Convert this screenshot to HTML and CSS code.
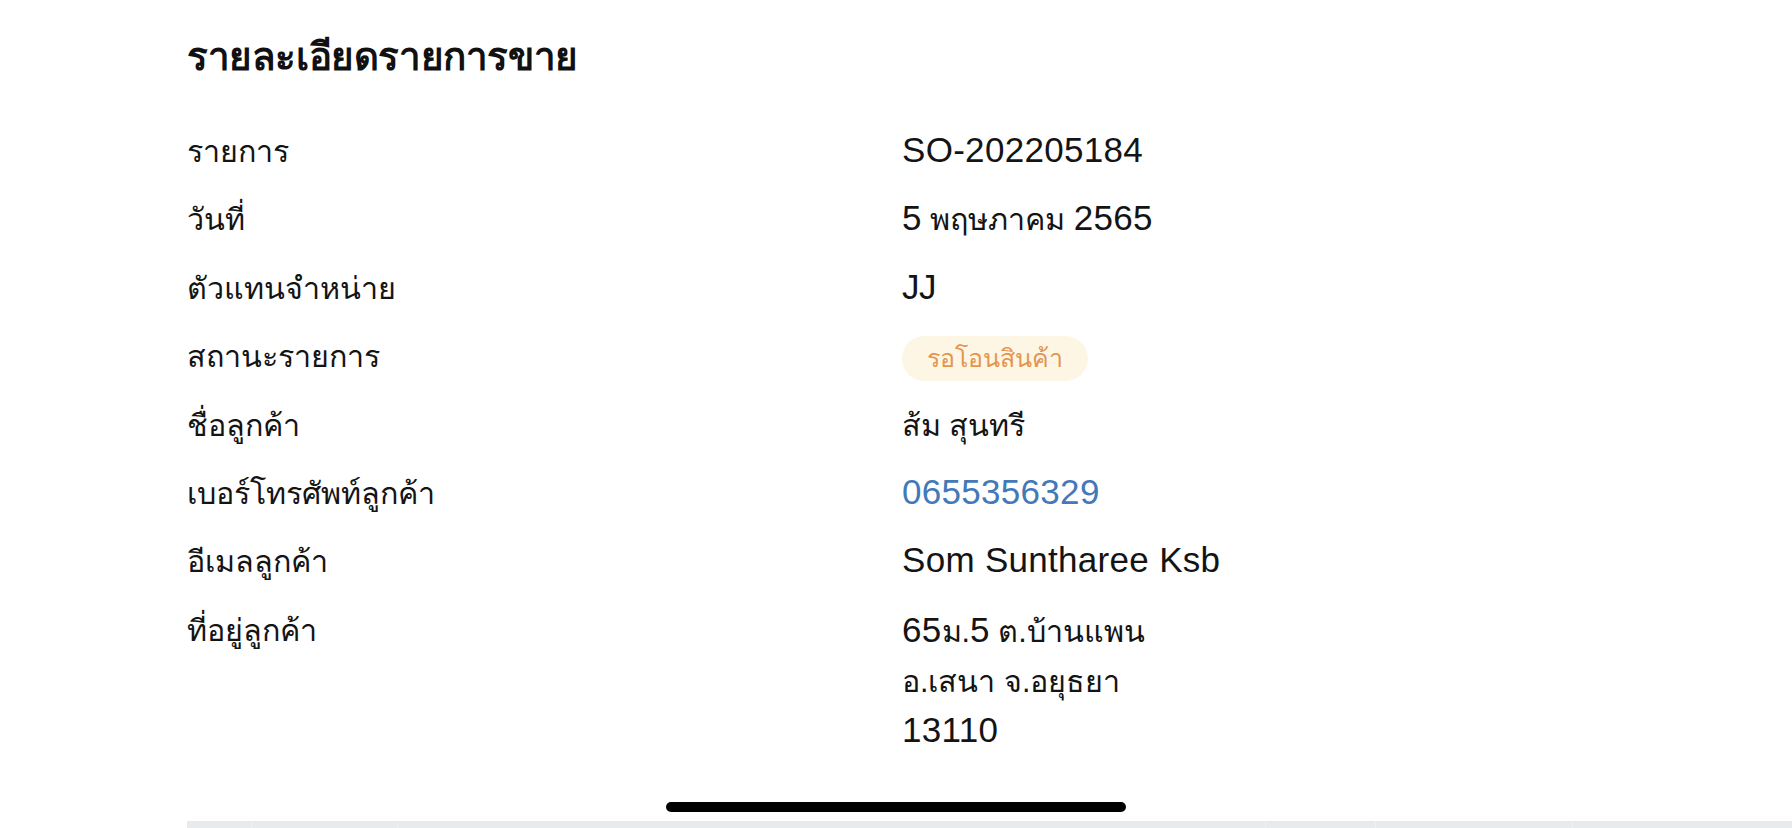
FILE: index.html
```html
<!DOCTYPE html>
<html lang="th">
<head>
<meta charset="utf-8">
<title>รายละเอียดรายการขาย</title>
<link rel="stylesheet" href="styles.css">
</head>
<body>
<main class="page">
  <h1 class="title">รายละเอียดรายการขาย</h1>
  <dl class="details">
    <dt>รายการ</dt><dd><span class="line"><span class="en">SO-202205184</span></span></dd>
    <dt>วันที่</dt><dd><span class="line"><span class="en">5</span> พฤษภาคม <span class="en">2565</span></span></dd>
    <dt>ตัวแทนจำหน่าย</dt><dd><span class="line"><span class="en jj">JJ</span></span></dd>
    <dt>สถานะรายการ</dt><dd class="status"><span class="badge">รอโอนสินค้า</span></dd>
    <dt>ชื่อลูกค้า</dt><dd><span class="line">ส้ม สุนทรี</span></dd>
    <dt>เบอร์โทรศัพท์ลูกค้า</dt><dd><span class="line"><a class="phone en" href="#">0655356329</a></span></dd>
    <dt>อีเมลลูกค้า</dt><dd><span class="line"><span class="en">Som Suntharee Ksb</span></span></dd>
    <dt>ที่อยู่ลูกค้า</dt>
    <dd class="address">
      <span class="line"><span class="en">65</span>ม.<span class="en">5</span> ต.บ้านแพน</span>
      <span class="line">อ.เสนา จ.อยุธยา</span>
      <span class="line"><span class="en">13110</span></span>
    </dd>
  </dl>
  <div class="table-head">
    <div class="th c1"></div>
    <div class="th c2"></div>
    <div class="th c3"></div>
    <div class="th c4"></div>
    <div class="th c5"></div>
    <div class="th c6"></div>
  </div>
</main>
<div class="home-indicator"></div>
</body>
</html>
```
FILE: styles.css
```css
html, body {
  margin: 0;
  padding: 0;
  background: #ffffff;
  overflow: hidden;
}
body {
  font-family: "Liberation Sans", "Noto Sans", sans-serif;
  color: #141414;
  height: 828px;
}
.page {
  padding-left: 187px;
  padding-top: 31px;
}
.title {
  margin: 0;
  font-size: 38.5px;
  line-height: 52px;
  font-weight: 700;
  color: #111111;
  letter-spacing: -0.4px;
}
.details {
  margin: 44px 0 0 0;
  display: grid;
  grid-template-columns: 715px 1fr;
  row-gap: 19.4px;
  font-size: 30.5px;
  line-height: 49px;
}
.details dt, .details dd {
  margin: 0;
}
.details dd {
  display: flex;
  flex-direction: column;
  align-items: flex-start;
}
.line {
  display: block;
}
.en {
  font-size: 35px;
  line-height: 0;
  letter-spacing: 0.3px;
}
.jj {
  letter-spacing: -0.5px;
}
.address {
  line-height: 50px;
}
.status {
  justify-content: center;
}
.badge {
  display: inline-flex;
  align-items: center;
  height: 45px;
  padding: 0 25px;
  border-radius: 23px;
  background: #fdf6e5;
  color: #e39550;
  font-size: 25px;
  line-height: 45px;
  margin-top: 3px;
}
.phone {
  color: #4279b8;
  text-decoration: none;
}
.table-head {
  margin-top: 65px;
  display: flex;
  height: 12px;
  background: #e8ebee;
}
.th {
  border-right: 1px solid #eef0f2;
}
.c1 { width: 64px; }
.c2 { width: 145px; }
.c3 { width: 867px; }
.c4 { width: 109px; }
.c5 { width: 196px; }
.c6 { flex: 1; border-right: none; }
.home-indicator {
  position: fixed;
  left: 666px;
  top: 802px;
  width: 460px;
  height: 10px;
  border-radius: 5px;
  background: #000000;
}
```
